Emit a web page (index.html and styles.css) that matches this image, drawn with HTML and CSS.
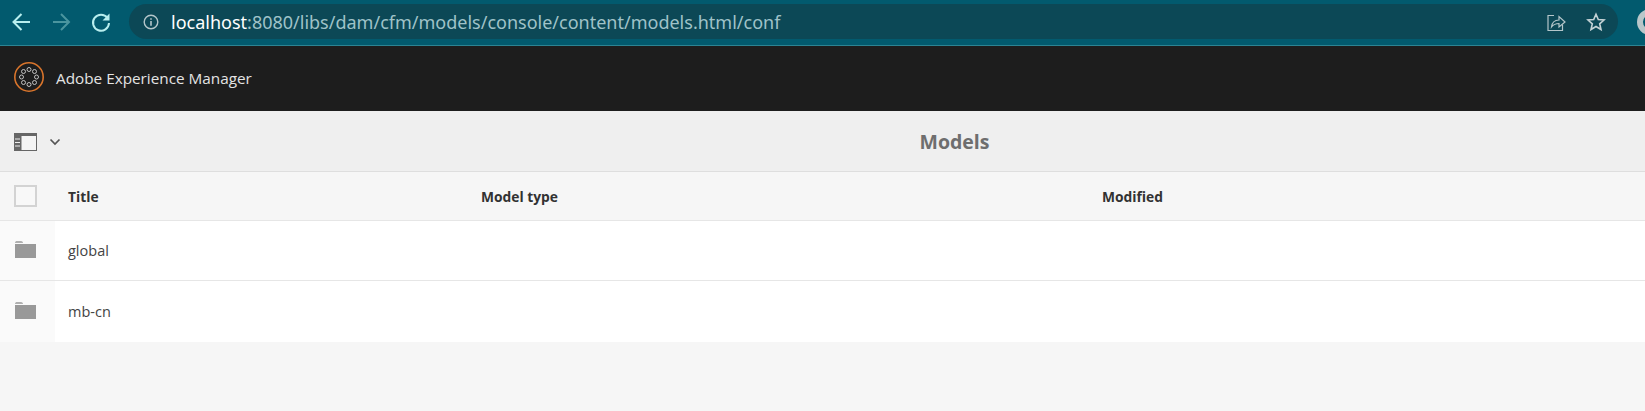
FILE: index.html
```html
<!DOCTYPE html>
<html lang="en">
<head>
<meta charset="utf-8">
<title>Models</title>
<link rel="stylesheet" href="styles.css">
</head>
<body>
<div class="browser">
  <svg class="nav-icon" width="24" height="24" viewBox="0 0 24 24"><path d="M21 12H5M12.500 4 4.500 12l8 8" fill="none" stroke="#b8eeee" stroke-width="2"/></svg>
  <svg class="nav-icon" width="24" height="24" viewBox="0 0 24 24"><path d="M4 12h16M12 4l8 8-8 8" fill="none" stroke="#4b959f" stroke-width="2"/></svg>
  <svg class="nav-icon" width="24" height="24" viewBox="0 0 24 24"><path d="M18.500 8A8 8 0 1 0 20 13" fill="none" stroke="#b8eeee" stroke-width="2"/><path d="M20.500 3.500V10.500h-7z" fill="#b8eeee"/></svg>
  <div class="omnibox">
    <svg class="info" width="16" height="16" viewBox="0 0 16 16"><circle cx="8" cy="8" r="6.800" fill="none" stroke="#b4c6ca" stroke-width="1.400"/><path d="M7.200 7h1.600v4.800H7.200zM7.200 4.200h1.600v1.600H7.200z" fill="#b4c6ca"/></svg>
    <div class="url"><span class="host">localhost</span>:8080/libs/dam/cfm/models/console/content/models.html/conf</div>
    <svg class="share" width="20" height="20" viewBox="0 0 20 20"><path d="M8 3.500H2v15h14.500v-6" fill="none" stroke="#b4c6ca" stroke-width="1.200"/><path d="M5.500 15c.5-4.500 3.500-7 7.500-7V4.500l6 5.500-6 5v-3.500c-3 0-5.500 1-7.500 3.500z" fill="none" stroke="#b4c6ca" stroke-width="1.200"/></svg>
    <svg class="star" width="20" height="20" viewBox="0 0 20 20"><path d="M10 2.200l2.300 5.300 5.700.5-4.300 3.800 1.300 5.700L10 14.500l-5 3 1.300-5.700L2 8l5.700-.5z" fill="none" stroke="#c4d2d5" stroke-width="1.600"/></svg>
  </div>
  <div class="avatar"></div>
</div>
<header class="shell">
  <svg class="logo" width="32" height="32" viewBox="0 0 32 32">
    <circle cx="16" cy="16" r="14.200" fill="none" stroke="#d9752c" stroke-width="1.600"/>
    <g fill="none" stroke="#cfcfcf" stroke-width=".9">
      <circle cx="16" cy="8.500" r="2"/><circle cx="21.500" cy="10.500" r="2"/><circle cx="23.500" cy="16" r="2"/><circle cx="21.500" cy="21.500" r="2"/>
      <circle cx="16" cy="23.500" r="2"/><circle cx="10.500" cy="21.500" r="2"/><circle cx="8.500" cy="16" r="2"/><circle cx="10.500" cy="10.500" r="2"/>
    </g>
  </svg>
  <span class="brand">Adobe Experience Manager</span>
</header>
<div class="actionbar">
  <div class="rail-toggle">
    <svg width="23" height="18" viewBox="0 0 23 18"><rect x=".5" y=".5" width="22" height="17" fill="#f4f4f4" stroke="#666"/><rect width="7.500" height="18" fill="#666"/><rect width="23" height="3" fill="#666"/><path d="M1 6h5M1 9.500h5M1 13h5" stroke="#eee" stroke-width="1.200"/></svg>
    <svg width="12" height="8" viewBox="0 0 12 8"><path d="M1.500 1.500 6 6l4.500-4.500" fill="none" stroke="#555" stroke-width="1.700"/></svg>
  </div>
  <h1 class="page-title">Models</h1>
</div>
<div class="table">
  <div class="row head">
    <div class="cell-select"><span class="checkbox"></span></div>
    <div class="col-title">Title</div>
    <div class="col-type">Model type</div>
    <div class="col-mod">Modified</div>
  </div>
  <div class="row item">
    <div class="cell-select"><svg width="22" height="19" viewBox="0 0 22 19"><path d="M1 3c0-1.500 1-2 2-2h4c1.500 0 2 1 2 2z" fill="#b0b0b0"/><rect x="1" y="4" width="21" height="14" fill="#999"/></svg></div>
    <div class="col-title">global</div>
    <div class="col-type"></div>
    <div class="col-mod"></div>
  </div>
  <div class="row item last">
    <div class="cell-select"><svg width="22" height="19" viewBox="0 0 22 19"><path d="M1 3c0-1.500 1-2 2-2h4c1.500 0 2 1 2 2z" fill="#b0b0b0"/><rect x="1" y="4" width="21" height="14" fill="#999"/></svg></div>
    <div class="col-title">mb-cn</div>
    <div class="col-type"></div>
    <div class="col-mod"></div>
  </div>
</div>
</body>
</html>
```
FILE: styles.css
```css
* { box-sizing: border-box; }
html, body { margin: 0; height: 100%; overflow: hidden; }
body { background: #f6f6f6; font-family: "Open Sans", "Noto Sans", sans-serif; color: #2c2c2c; }

.browser {
  height: 46px;
  background: #025a6e;
  border-bottom: 1px solid #2c8493;
  display: flex;
  align-items: center;
  padding: 0 0 2px 9px;
  overflow: hidden;
}
.nav-icon { flex: none; margin-right: 16px; }
.omnibox {
  flex: none;
  width: 1489px;
  height: 35px;
  background: #0c4856;
  border-radius: 18px;
  display: flex;
  align-items: center;
  padding: 0 12px 0 14px;
}
.info { flex: none; }
.url { flex: 1; margin-left: 12px; font-family: "Noto Sans", sans-serif; font-size: 18px; color: #9fc2c8; white-space: nowrap; }
.host { color: #fff; }
.share { flex: none; margin-right: 20px; }
.star { flex: none; }
.avatar { flex: none; width: 26px; height: 26px; margin-left: 19px; border-radius: 50%; border: 6px solid #b9c6c9; }

.shell { height: 65px; background: #1d1d1d; display: flex; align-items: center; padding: 0 0 3px 13px; }
.brand { margin: 2px 0 0 11px; font-size: 15.300px; color: #e4e4e4; }
.logo { flex: none; }

.actionbar { height: 61px; padding-left: 264px; background: #efefef; border-bottom: 1px solid #dedede; position: relative; display: flex; align-items: center; justify-content: center; }
.rail-toggle { position: absolute; left: 14px; top: 22px; display: flex; align-items: center; gap: 12px; }
.page-title { margin: 0; font-size: 19.500px; font-weight: 700; color: #6e6e6e; }

.row { display: flex; align-items: center; background: #fff; border-bottom: 1px solid #e6e6e6; }
.head { height: 49px; background: #f6f6f6; font-size: 13.800px; font-weight: 700; color: #323232; }
.item { height: 60px; font-size: 14.500px; color: #444; }
.last { border-bottom: 0; height: 61px; }
.cell-select { width: 55px; align-self: stretch; flex: none; display: flex; align-items: center; padding-left: 14px; }
.item .cell-select { background: #fafafa; padding-bottom: 2px; }
.checkbox { width: 23px; height: 22px; background: #f8f8f8; border: 2px solid #d3d3d3; }
.col-title { width: 426px; padding-left: 13px; flex: none; }
.col-type { width: 621px; flex: none; }
.col-mod { flex: 1; }
```
